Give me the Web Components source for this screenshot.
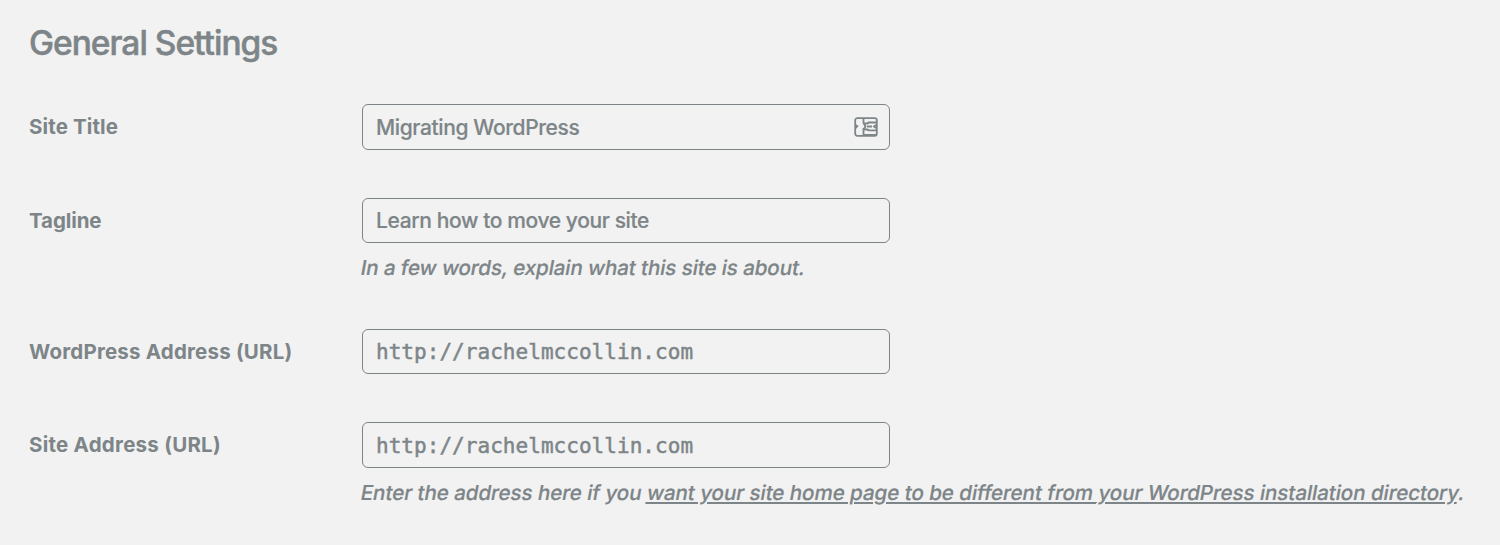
<!DOCTYPE html>
<html lang="en"><head><meta charset="utf-8"><title>General Settings</title>
<style>body{margin:0;background:#f2f2f2;color:#7d8588;font-family:Inter,"Liberation Sans",sans-serif}</style></head>
<body>
<settings-page>
<setting-row label="Site Title"><text-field value="Migrating WordPress" autofill></text-field></setting-row>
<setting-row label="Tagline" style="--h:131px;--label-ls:-.1px"><text-field value="Learn how to move your site"></text-field><help-text slot="help" style="--ls:-.12px">In a few words, explain what this site is about.</help-text></setting-row>
<setting-row label="WordPress Address (URL)" style="--label-ls:.2px"><text-field value="http://rachelmccollin.com" mono></text-field></setting-row>
<setting-row label="Site Address (URL)" style="--label-ls:.25px"><text-field value="http://rachelmccollin.com" mono></text-field><help-text slot="help">Enter the address here if you <help-link>want your site home page to be different from your WordPress installation directory</help-link>.</help-text></setting-row>
</settings-page>
<script>
const define = (name, html, setup) => customElements.define(name, class extends HTMLElement {
  connectedCallback() {
    if (this.shadowRoot) return;
    this.attachShadow({mode: 'open'}).innerHTML = html;
    if (setup) setup(this, this.shadowRoot);
  }
});
define('help-link', `<style>
:host{display:inline}
a{color:inherit;text-decoration:underline;text-decoration-thickness:2px;text-underline-offset:2px}
</style><a><slot></slot></a>`);
define('help-text', `<style>
:host{display:block;font-size:20.6px;line-height:30px;white-space:nowrap;font-weight:500;letter-spacing:var(--ls,-.08px);margin:10px 0 0 -1px;transform:skewX(-10deg);-webkit-text-stroke:.2px}
</style><slot></slot>`);
define('text-field', `<style>
:host{display:flex;align-items:center;justify-content:space-between;box-sizing:border-box;width:528px;height:45.5px;border:1.5px solid #7d8588;border-radius:6px;padding:0 11px 0 13px;font-size:21px;line-height:30px;white-space:pre;font-weight:500;letter-spacing:-.38px;-webkit-text-stroke:.2px}
:host([mono]){font-family:"DejaVu Sans Mono",monospace;font-weight:400;letter-spacing:.04px;-webkit-text-stroke:.5px}
span{padding-top:2px}
svg{display:none}
:host([autofill]) svg{display:block}
</style><span></span><svg width="24" height="20" viewBox="0 0 24 20" fill="none" stroke="currentColor" stroke-width="1.8"><rect x="1.2" y="1.2" width="21.6" height="17.6" rx="2"/><path d="M9.5 2v4.5M9.5 6.5h4l1-1h8M9.5 11v7.5M10.5 12.5h3l1 .8h8M1.5 8l1.8 1.2L1.5 11M9 18h14M22 8l-2 1.5 2 1.5M13 9.5h5M9.5 6l2 3.5-2 3"/></svg>`,
(e, r) => r.querySelector('span').textContent = e.getAttribute('value'));
define('setting-row', `<style>
:host{display:grid;grid-template-columns:333px 1fr;align-items:start;height:var(--h,93.5px)}
label{font-size:20.5px;font-weight:700;line-height:30px;padding-top:8px;white-space:nowrap;letter-spacing:var(--label-ls,.12px)}
</style><label></label><div><slot></slot><slot name="help"></slot></div>`,
(e, r) => r.querySelector('label').textContent = e.getAttribute('label'));
define('settings-page', `<style>
:host{display:block;box-sizing:border-box;height:545px;overflow:hidden;padding:22px 0 0 29px}
h1{margin:0 0 40px;font-size:33.5px;font-weight:500;line-height:42px;letter-spacing:-1px;-webkit-text-stroke:.5px}
</style><h1>General Settings</h1><slot></slot>`);
</script></body></html>
